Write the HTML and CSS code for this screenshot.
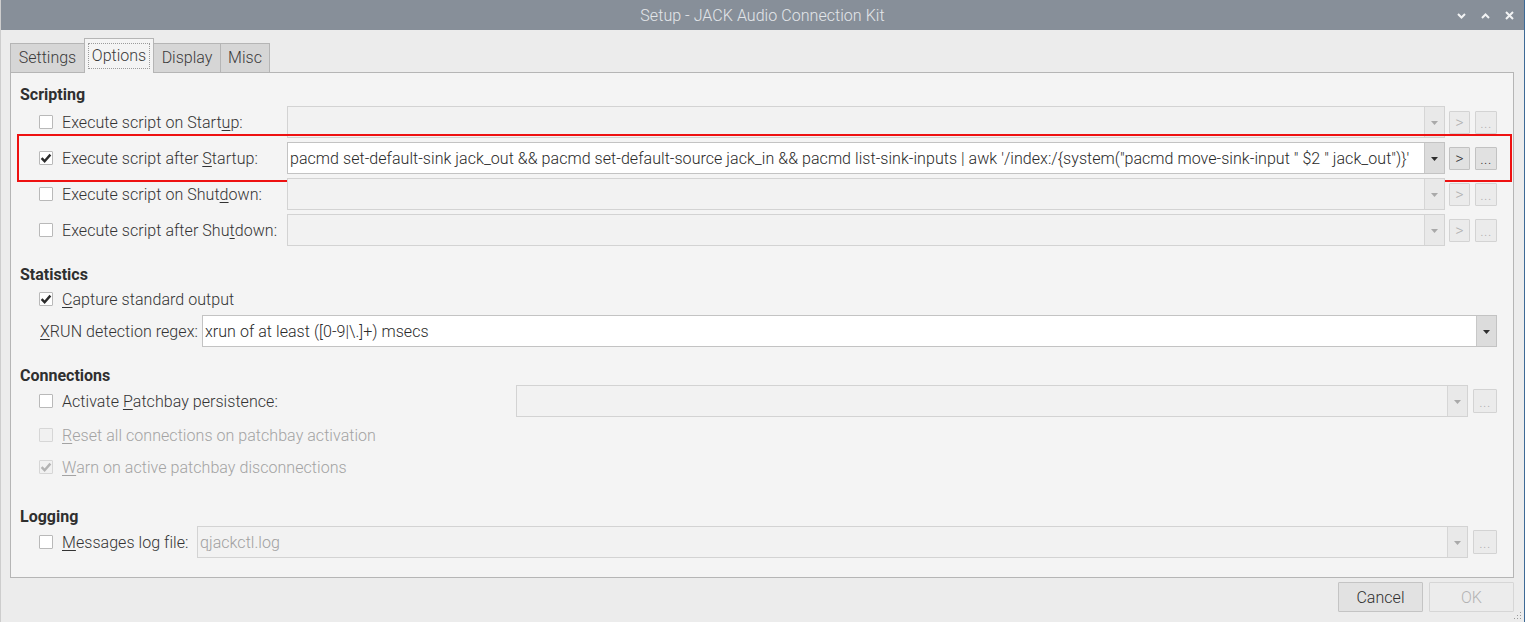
FILE: index.html
```html
<!DOCTYPE html>
<html>
<head>
<meta charset="utf-8">
<title>Setup - JACK Audio Connection Kit</title>
<link rel="stylesheet" href="styles.css">
</head>
<body>
<div class="window">
  <div class="titlebar">
    <span class="title">Setup - JACK Audio Connection Kit</span>
    <div class="wm">
      <svg width="9" height="6" viewBox="0 0 9 6"><path d="M1 1 L4.5 4.5 L8 1" fill="none" stroke="#f2f3f4" stroke-width="2"/></svg>
      <svg width="9" height="6" viewBox="0 0 9 6"><path d="M1 5 L4.5 1.5 L8 5" fill="none" stroke="#f2f3f4" stroke-width="2"/></svg>
      <svg width="9" height="9" viewBox="0 0 9 9"><path d="M1 1 L8 8 M8 1 L1 8" fill="none" stroke="#f2f3f4" stroke-width="2"/></svg>
    </div>
  </div>
  <div class="client">
    <div class="tabs">
      <div class="tab tab-settings">Settings</div>
      <div class="tab tab-options active"><span class="focus">Options</span></div>
      <div class="tab tab-display">Display</div>
      <div class="tab tab-misc">Misc</div>
    </div>
    <div class="pane">
      <div class="sec">Scripting</div>

      <div class="row chk-row">
        <div class="lead lead-script"><span class="cb"></span><span class="lbl">Execute script on Start<u>u</u>p:</span></div>
        <div class="combo disabled"><div class="field"></div><div class="drop"><svg width="7" height="4" viewBox="0 0 7 4"><polygon points="0,0 7,0 3.5,4"/></svg></div></div>
        <div class="tool disabled tool-go">&gt;</div>
        <div class="tool disabled tool-dots">...</div>
      </div>

      <div class="row chk-row marked">
        <div class="lead lead-script"><span class="cb checked"><svg width="14" height="14" viewBox="0 0 14 14"><path d="M2.6 7.2 L5.6 10.2 L11.4 3.6" fill="none" stroke="#2b2b2b" stroke-width="2.4"/></svg></span><span class="lbl">Execute script after <u>S</u>tartup:</span></div>
        <div class="combo"><div class="field">pacmd set-default-sink jack_out &amp;&amp; pacmd set-default-source jack_in &amp;&amp; pacmd list-sink-inputs | awk '/index:/{system("pacmd move-sink-input " $2 " jack_out")}'</div><div class="drop"><svg width="7" height="4" viewBox="0 0 7 4"><polygon points="0,0 7,0 3.5,4"/></svg></div></div>
        <div class="tool tool-go">&gt;</div>
        <div class="tool tool-dots">...</div>
      </div>

      <div class="row chk-row">
        <div class="lead lead-script"><span class="cb"></span><span class="lbl">Execute script on Shut<u>d</u>own:</span></div>
        <div class="combo disabled"><div class="field"></div><div class="drop"><svg width="7" height="4" viewBox="0 0 7 4"><polygon points="0,0 7,0 3.5,4"/></svg></div></div>
        <div class="tool disabled tool-go">&gt;</div>
        <div class="tool disabled tool-dots">...</div>
      </div>

      <div class="row chk-row">
        <div class="lead lead-script"><span class="cb"></span><span class="lbl">Execute script after Shu<u>t</u>down:</span></div>
        <div class="combo disabled"><div class="field"></div><div class="drop"><svg width="7" height="4" viewBox="0 0 7 4"><polygon points="0,0 7,0 3.5,4"/></svg></div></div>
        <div class="tool disabled tool-go">&gt;</div>
        <div class="tool disabled tool-dots">...</div>
      </div>

      <div class="sec sec-gap">Statistics</div>

      <div class="row chk-row row-capture">
        <div class="lead"><span class="cb checked"><svg width="14" height="14" viewBox="0 0 14 14"><path d="M2.6 7.2 L5.6 10.2 L11.4 3.6" fill="none" stroke="#2b2b2b" stroke-width="2.4"/></svg></span><span class="lbl"><u>C</u>apture standard output</span></div>
      </div>

      <div class="row chk-row row-xrun">
        <div class="lead lead-xrun"><span class="lbl lbl-plain"><u>X</u>RUN detection regex:</span></div>
        <div class="combo"><div class="field">xrun of at least ([0-9|\.]+) msecs</div><div class="drop"><svg width="7" height="4" viewBox="0 0 7 4"><polygon points="0,0 7,0 3.5,4"/></svg></div></div>
      </div>

      <div class="sec sec-gap">Connections</div>

      <div class="row chk-row row-32">
        <div class="lead lead-patch"><span class="cb"></span><span class="lbl">Activate <u>P</u>atchbay persistence:</span></div>
        <div class="combo disabled"><div class="field"></div><div class="drop"><svg width="7" height="4" viewBox="0 0 7 4"><polygon points="0,0 7,0 3.5,4"/></svg></div></div>
        <div class="tool disabled tool-dots tool-wide">...</div>
      </div>

      <div class="row chk-row row-36">
        <div class="lead"><span class="cb off"></span><span class="lbl off"><u>R</u>eset all connections on patchbay activation</span></div>
      </div>

      <div class="row chk-row row-28">
        <div class="lead"><span class="cb off checked"><svg width="14" height="14" viewBox="0 0 14 14"><path d="M2.6 7.2 L5.6 10.2 L11.4 3.6" fill="none" stroke="#b3b3b3" stroke-width="2.4"/></svg></span><span class="lbl off"><u>W</u>arn on active patchbay disconnections</span></div>
      </div>

      <div class="sec sec-gap-log">Logging</div>

      <div class="row chk-row row-32">
        <div class="lead lead-log"><span class="cb"></span><span class="lbl"><u>M</u>essages log file:</span></div>
        <div class="combo disabled"><div class="field field-dim">qjackctl.log</div><div class="drop"><svg width="7" height="4" viewBox="0 0 7 4"><polygon points="0,0 7,0 3.5,4"/></svg></div></div>
        <div class="tool disabled tool-dots tool-wide">...</div>
      </div>
    </div>
    <div class="buttons">
      <div class="btn">Cancel</div>
      <div class="btn disabled">OK</div>
    </div>
  </div>
  <svg class="grip" width="10" height="10" viewBox="0 0 10 10">
    <g fill="#9a9a9a"><rect x="7" y="1" width="1" height="1"/><rect x="4" y="4" width="1" height="1"/><rect x="7" y="4" width="1" height="1"/><rect x="1" y="7" width="1" height="1"/><rect x="4" y="7" width="1" height="1"/><rect x="7" y="7" width="1" height="1"/></g>
  </svg>
</div>
</body>
</html>
```
FILE: styles.css
```css
* { box-sizing: border-box; }
html, body { margin: 0; padding: 0; }
body {
  width: 1525px;
  height: 622px;
  overflow: hidden;
  background: #ececec;
  font-family: Roboto, "Liberation Sans", sans-serif;
  font-size: 16px;
  font-weight: 300;
  letter-spacing: 0.05px;
  color: #333333;
}
u { text-decoration: underline; text-underline-offset: 2px; text-decoration-thickness: 1px; }

.window {
  position: relative;
  height: 622px;
  display: flex;
  flex-direction: column;
  border-left: 1px solid #cdcdcd;
  border-right: 1px solid #3d6a96;
}

.titlebar {
  height: 30px;
  flex: none;
  background: #878f99;
  display: grid;
  grid-template-columns: 1fr auto 1fr;
  align-items: center;
}
.title {
  grid-column: 2;
  color: #e3e6e9;
  font-size: 16px;
  font-weight: 300;
}
.wm {
  grid-column: 3;
  justify-self: end;
  display: flex;
  align-items: center;
  gap: 15px;
  padding-right: 10px;
  padding-top: 1px;
}

.client {
  flex: 1;
  display: flex;
  flex-direction: column;
  padding: 8px 10px 0 9px;
}

.tabs {
  height: 34px;
  display: flex;
  align-items: flex-end;
}
.tab {
  flex: none;
  height: 29px;
  padding-bottom: 1px;
  display: flex;
  align-items: center;
  justify-content: center;
  background: #d6d6d6;
  border: 1px solid #b5b5b5;
  border-bottom: none;
  color: #3a3a3a;
  letter-spacing: 0;
  margin-left: -1px;
}
.tab:first-child { margin-left: 0; }
.tab-settings { width: 75px; }
.tab-options { width: 70px; }
.tab-display { width: 68px; }
.tab-misc { width: 50px; }
.tab.active {
  position: relative;
  z-index: 2;
  height: 35px;
  margin-bottom: -1px;
  background: #f4f4f4;
  padding-bottom: 0;
}
.focus {
  border: 1px dotted #9b9b9b;
  padding: 2px 3px 2px 3px;
  line-height: 20px;
}

.pane {
  height: 506px;
  flex: none;
  background: #f4f4f4;
  border: 1px solid #b5b5b5;
  padding: 13px 16px 0 9px;
  display: flex;
  flex-direction: column;
}

.sec {
  height: 18px;
  line-height: 18px;
  font-weight: 700;
  letter-spacing: 0;
  color: #2f2f2f;
}
.sec-gap { margin-top: 18px; }
.sec-gap-log { margin-top: 27px; }

.row {
  position: relative;
  height: 36px;
  display: flex;
  align-items: center;
}
.chk-row { padding-left: 19px; }
.row-capture { height: 29px; }
.row-xrun { height: 36px; }
.row-32 { height: 32px; }
.row-36 { height: 36px; }
.row-28 { height: 28px; }

.marked::after {
  content: "";
  position: absolute;
  left: -3px;
  right: -15px;
  top: -6px;
  bottom: -6px;
  border: 2px solid #ee1111;
  pointer-events: none;
}

.lead {
  flex: none;
  display: flex;
  align-items: center;
}
.lead-script { width: 248px; }
.lead-xrun { width: 163px; }
.lead-patch { width: 477px; }
.lead-log { width: 158px; }

.cb {
  flex: none;
  width: 14px;
  height: 14px;
  margin-right: 9px;
  background: #ffffff;
  border: 1px solid #b9b9b9;
  border-radius: 1px;
  position: relative;
}
.cb svg { position: absolute; left: -1px; top: -1px; }
.cb.off { background: #f1f1f1; border-color: #d6d6d6; }

.lbl { white-space: nowrap; color: #333333; padding-top: 1px; }
.lbl-plain { padding-left: 1px; }
.lbl.off { color: #a3a3a3; }

.combo {
  flex: 1;
  height: 32px;
  display: flex;
  border: 1px solid #c3c3c3;
  background: #ffffff;
  min-width: 0;
}
.combo .field {
  flex: 1;
  min-width: 0;
  padding-left: 2px;
  display: flex;
  align-items: center;
  white-space: nowrap;
  overflow: hidden;
  color: #2a2a2a;
}
.field-dim { color: #a0a0a0 !important; }
.combo .drop {
  flex: none;
  width: 20px;
  border-left: 1px solid #c8c8c8;
  background: #dcdcdc;
  display: flex;
  align-items: center;
  justify-content: center;
  padding-top: 2px;
}
.combo .drop svg { fill: #2e2e2e; }
.combo.disabled { background: #f2f2f2; border-color: #d3d3d3; }
.combo.disabled .drop { background: #e9e9e9; border-left-color: #d6d6d6; }
.combo.disabled .drop svg { fill: #a9a9a9; }

.tool {
  flex: none;
  height: 23px;
  border: 1px solid #c2c2c2;
  background: #e1e1e1;
  border-radius: 1px;
  color: #333333;
  font-size: 14px;
  display: flex;
  align-items: center;
  justify-content: center;
}
.tool-go { width: 21px; margin-left: 4px; font-size: 16px; }
.tool-dots { width: 22px; margin-left: 5px; padding-top: 2px; letter-spacing: 0.5px; }
.tool-wide { width: 24px; height: 24px; margin-left: 5px; }
.tool.disabled { background: #ebebeb; border-color: #d3d3d3; color: #b0b0b0; }

.buttons {
  margin-top: 4px;
  display: flex;
  justify-content: flex-end;
  gap: 6px;
}
.btn {
  width: 85px;
  height: 30px;
  border: 1px solid #c4c4c4;
  background: #e2e2e2;
  border-radius: 1px;
  display: flex;
  align-items: center;
  justify-content: center;
  color: #2f2f2f;
}
.btn.disabled { background: #ececec; border-color: #d6d6d6; color: #b3b3b3; }

.grip { position: absolute; right: 1px; bottom: 1px; }
```
